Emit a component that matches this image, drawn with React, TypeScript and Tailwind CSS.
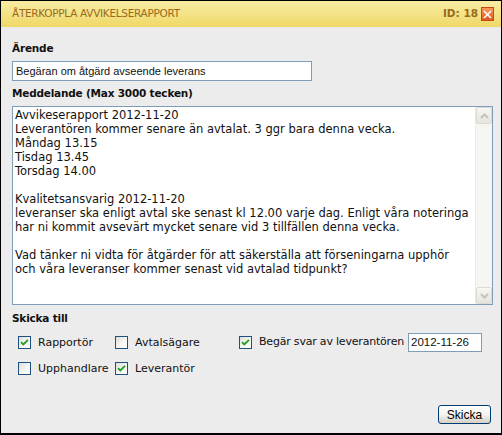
import React from "react";

const lines = [
  "Avvikeserapport 2012-11-20",
  "Leverantören kommer senare än avtalat. 3 ggr bara denna vecka.",
  "Måndag 13.15",
  "Tisdag 13.45",
  "Torsdag 14.00",
  "",
  "Kvalitetsansvarig 2012-11-20",
  "leveranser ska enligt avtal ske senast kl 12.00 varje dag. Enligt våra noteringa",
  "har ni kommit avsevärt mycket senare vid 3 tillfällen denna vecka.",
  "",
  "Vad tänker ni vidta för åtgärder för att säkerställa att förseningarna upphör",
  "och våra leveranser kommer senast vid avtalad tidpunkt?",
];

function Check({ checked }: { checked: boolean }) {
  return (
    <span className="w-[13px] h-[13px] border border-[#1c5180] bg-gradient-to-br from-[#dcdcd7] via-[#f4f4f1] to-white flex items-center justify-center shrink-0">
      {checked && (
        <svg width="9" height="9" viewBox="0 0 9 9">
          <path d="M1 4.2 L3.3 6.5 L8 1.8" stroke="#21a121" strokeWidth="1.8" fill="none" />
        </svg>
      )}
    </span>
  );
}

function CB({ checked, label, w }: { checked: boolean; label: string; w: string }) {
  return (
    <div className={`flex items-center gap-[7px] h-[13px] ${w}`}>
      <Check checked={checked} />
      <span className="leading-[13px]">{label}</span>
    </div>
  );
}

export default function App() {
  return (
    <div
      className="w-[502px] h-[435px] border border-black border-b-2 bg-[#ececec] flex flex-col text-[#111] text-[11px]"
      style={{ fontFamily: '"DejaVu Sans", Verdana, sans-serif' }}
    >
      <div className="h-[26px] bg-gradient-to-b from-[#f8eca3] to-[#efd866] flex items-center justify-between pl-[11px] pr-[7px] text-[#9a6a1c] text-[10.5px] tracking-[-0.3px]">
        <span>ÅTERKOPPLA AVVIKELSERAPPORT</span>
        <div className="flex items-center gap-[3px]">
          <span className="font-bold text-[10.5px] tracking-normal">ID: 18</span>
          <span className="w-[13px] h-[14px] bg-gradient-to-b from-[#f89a5a] to-[#e0561c] border border-[#c9481a] flex items-center justify-center">
            <svg width="9" height="9" viewBox="0 0 9 9">
              <path d="M1 1 L8 8 M8 1 L1 8" stroke="white" strokeWidth="1.6" />
            </svg>
          </span>
        </div>
      </div>

      <div className="flex flex-col pl-[11px] pr-[8px] flex-1">
        <div className="font-bold mt-[14px] leading-[14px] text-[10.5px] tracking-[-0.2px]">Ärende</div>
        <div
          className="mt-[6px] w-[300px] h-[20px] border border-[#7f9db9] bg-white flex items-center pl-[3px] text-[11px]"
          style={{ fontFamily: '"Liberation Sans", Arial, sans-serif' }}
        >
          Begäran om åtgärd avseende leverans
        </div>
        <div className="font-bold mt-[5px] leading-[14px] text-[10.5px] tracking-[-0.2px]">Meddelande (Max 3000 tecken)</div>
        <div className="mt-[6px] w-[481px] h-[199px] border border-[#7f9db9] bg-white flex">
          <div className="flex-1 pl-[2px] pt-[1px] overflow-hidden text-[11.5px] leading-[14px]">
            {lines.map((l, i) => (
              <div key={i} className="whitespace-nowrap h-[14px]">
                {l}
              </div>
            ))}
          </div>
          <div className="w-[17px] bg-[#f5f5f2] border-l border-[#eceae2] flex flex-col justify-between">
            <div className="h-[17px] border border-[#dcdbd3] rounded-[2px] bg-gradient-to-b from-[#f6f6f3] to-[#e5e4dd] flex items-center justify-center">
              <svg width="9" height="6" viewBox="0 0 9 6">
                <path d="M1 5 L4.5 1.5 L8 5" stroke="#c5c4bc" strokeWidth="2" fill="none" />
              </svg>
            </div>
            <div className="h-[17px] border border-[#dcdbd3] rounded-[2px] bg-gradient-to-b from-[#f6f6f3] to-[#e5e4dd] flex items-center justify-center">
              <svg width="9" height="6" viewBox="0 0 9 6">
                <path d="M1 1 L4.5 4.5 L8 1" stroke="#c5c4bc" strokeWidth="2" fill="none" />
              </svg>
            </div>
          </div>
        </div>
        <div className="font-bold mt-[6px] leading-[14px] text-[10.5px] tracking-[-0.2px]">Skicka till</div>

        <div className="flex mt-[9px] pl-[6px]">
          <div className="flex flex-col gap-[13px] mt-[2px]">
            <div className="flex">
              <CB checked={true} label="Rapportör" w="w-[97px]" />
              <CB checked={false} label="Avtalsägare" w="w-[124px]" />
            </div>
            <div className="flex">
              <CB checked={false} label="Upphandlare" w="w-[97px]" />
              <CB checked={true} label="Leverantör" w="w-[124px]" />
            </div>
          </div>
          <div className="flex items-start -mt-[1px]">
            <div className="flex items-center h-[19px]">
              <Check checked={true} />
              <span className="ml-[7px] tracking-[-0.2px]">Begär svar av leverantören</span>
              <span
                className="ml-[4px] w-[74px] h-[19px] border border-[#7f9db9] bg-white flex items-center pl-[2px] text-[11.5px]"
                style={{ fontFamily: '"Liberation Sans", Arial, sans-serif' }}
              >
                2012-11-26
              </span>
            </div>
          </div>
        </div>

        <div className="flex-1" />
        <div className="flex justify-end mb-[9px] pr-[2px]">
          <button
            className="w-[53px] h-[19px] border border-[#003c74] rounded-[3px] bg-gradient-to-b from-white via-[#f4f4f0] to-[#d6d0c5] text-[12px] text-black flex items-center justify-center"
            style={{ fontFamily: '"Liberation Sans", Arial, sans-serif' }}
          >
            Skicka
          </button>
        </div>
      </div>
    </div>
  );
}
